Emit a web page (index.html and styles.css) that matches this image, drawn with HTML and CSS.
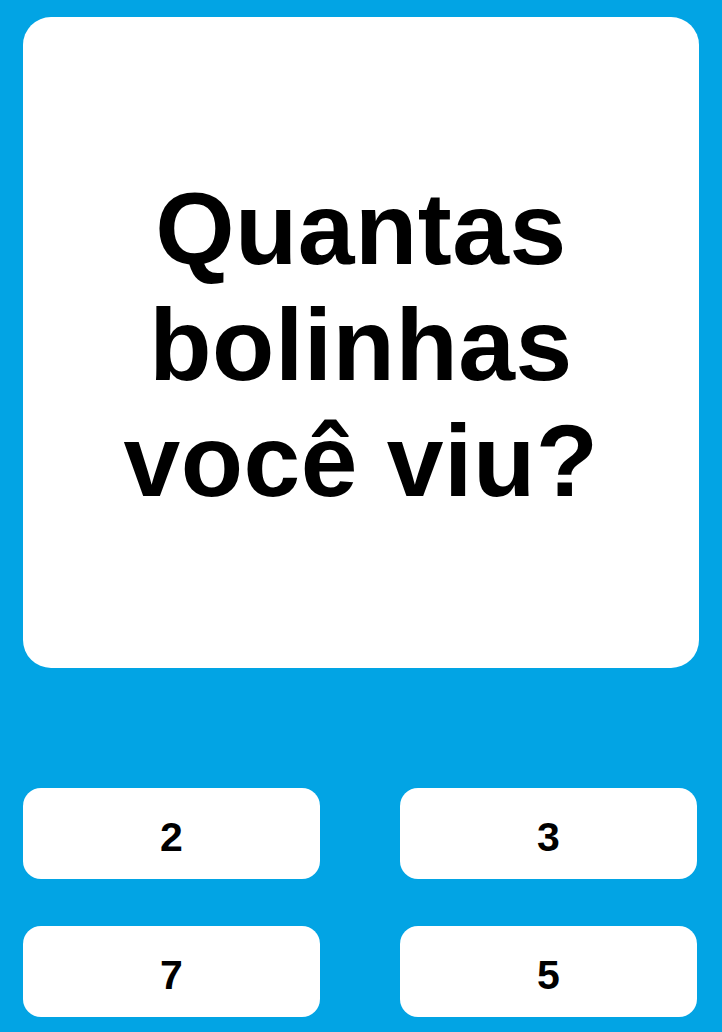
FILE: index.html
```html
<!DOCTYPE html>
<html lang="pt">
<head>
<meta charset="utf-8">
<title>Quiz</title>
<link rel="stylesheet" href="styles.css">
</head>
<body>
<main class="screen">
  <section class="question-card">
    <h1 class="question">Quantas<br>bolinhas<br>você viu?</h1>
  </section>
  <div class="answers">
    <button class="answer">2</button>
    <button class="answer">3</button>
    <button class="answer">7</button>
    <button class="answer">5</button>
  </div>
</main>
</body>
</html>
```
FILE: styles.css
```css
html, body {
  margin: 0;
  padding: 0;
  background: #02a4e4;
}
body {
  font-family: "Liberation Sans", Arial, sans-serif;
  width: 722px;
  height: 1032px;
  overflow: hidden;
}
.screen {
  box-sizing: border-box;
  height: 1032px;
  padding: 17px 23px 15px;
  display: flex;
  flex-direction: column;
}
.question-card {
  height: 651px;
  background: #ffffff;
  border-radius: 28px;
  display: flex;
  align-items: center;
  justify-content: center;
  padding-top: 4px;
  box-sizing: border-box;
}
.question {
  margin: 0;
  font-size: 102px;
  line-height: 116px;
  font-weight: 700;
  color: #000000;
  text-align: center;
  letter-spacing: 0.5px;
}
.answers {
  margin-top: 120px;
  display: grid;
  grid-template-columns: 297px 297px;
  grid-auto-rows: 91px;
  column-gap: 80px;
  row-gap: 47px;
}
.answer {
  border: none;
  background: #ffffff;
  border-radius: 18px;
  font-family: "Liberation Sans", Arial, sans-serif;
  font-weight: 700;
  font-size: 41px;
  color: #000000;
  padding: 8px 0 0;
  display: flex;
  align-items: center;
  justify-content: center;
}
```
